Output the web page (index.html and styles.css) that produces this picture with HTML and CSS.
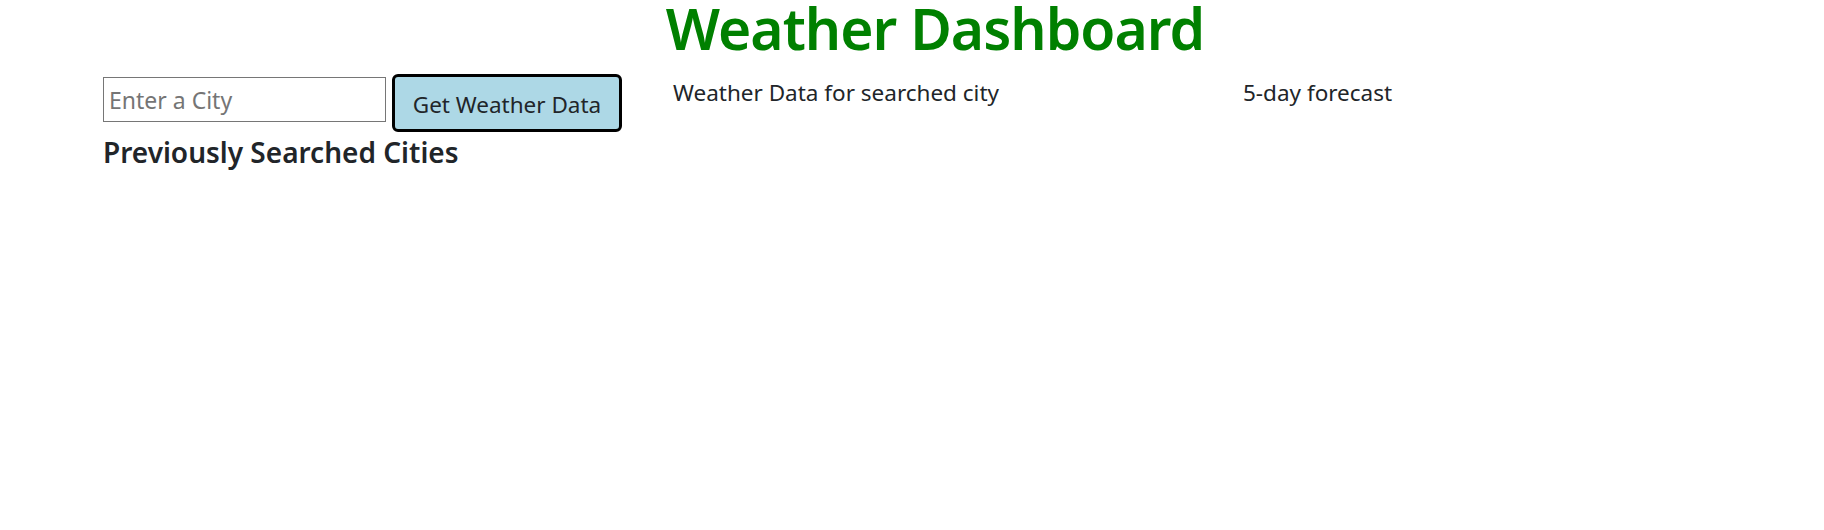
FILE: index.html
```html
<!DOCTYPE html>
<html lang="en">
<head>
<meta charset="utf-8">
<title>Weather Dashboard</title>
<link rel="stylesheet" href="styles.css">
</head>
<body>
<h1 class="title">Weather Dashboard</h1>
<div class="row">
  <div class="col col-search">
    <div class="search-form">
      <input class="city-input" type="text" placeholder="Enter a City">
      <button class="search-btn" type="button">Get Weather Data</button>
    </div>
    <h3 class="history-title">Previously Searched Cities</h3>
  </div>
  <div class="col">
    <p class="col-text">Weather Data for searched city</p>
  </div>
  <div class="col">
    <p class="col-text">5-day forecast</p>
  </div>
</div>
</body>
</html>
```

FILE: styles.css
```css
* { box-sizing: border-box; }
html, body {
  margin: 0;
  padding: 0;
  background: #fff;
}
body {
  font-family: "Noto Sans", "Open Sans", sans-serif;
  color: #212529;
  width: 1824px;
  height: 530px;
}
.title {
  margin: 0;
  padding-left: 46px;
  text-align: center;
  color: #008000;
  font-size: 57px;
  font-weight: 600;
  letter-spacing: -1px;
  line-height: 56px;
}
.row {
  display: grid;
  grid-template-columns: 570px 570px 1fr;
  padding-left: 103px;
  margin-top: 18px;
}
.search-form {
  display: flex;
  align-items: flex-start;
  gap: 6px;
}
.city-input {
  margin-top: 3px;
  width: 283px;
  height: 45px;
  border: 1px solid #767676;
  border-radius: 0;
  padding: 0 5px;
  font-family: inherit;
  font-size: 23px;
  color: #212529;
}
.city-input::placeholder { color: #757575; }
.search-btn {
  width: 230px;
  height: 58px;
  background: #add8e6;
  border: 3px solid #000;
  border-radius: 6px;
  font-family: inherit;
  font-size: 22.5px;
  color: #212529;
  padding: 2px 0 0;
}
.history-title {
  margin: 4px 0 0;
  font-size: 28px;
  font-weight: 600;
  line-height: 1.2;
}
.col-text {
  margin: 2px 0 0;
  font-size: 22.5px;
  line-height: 1.5;
}
```
